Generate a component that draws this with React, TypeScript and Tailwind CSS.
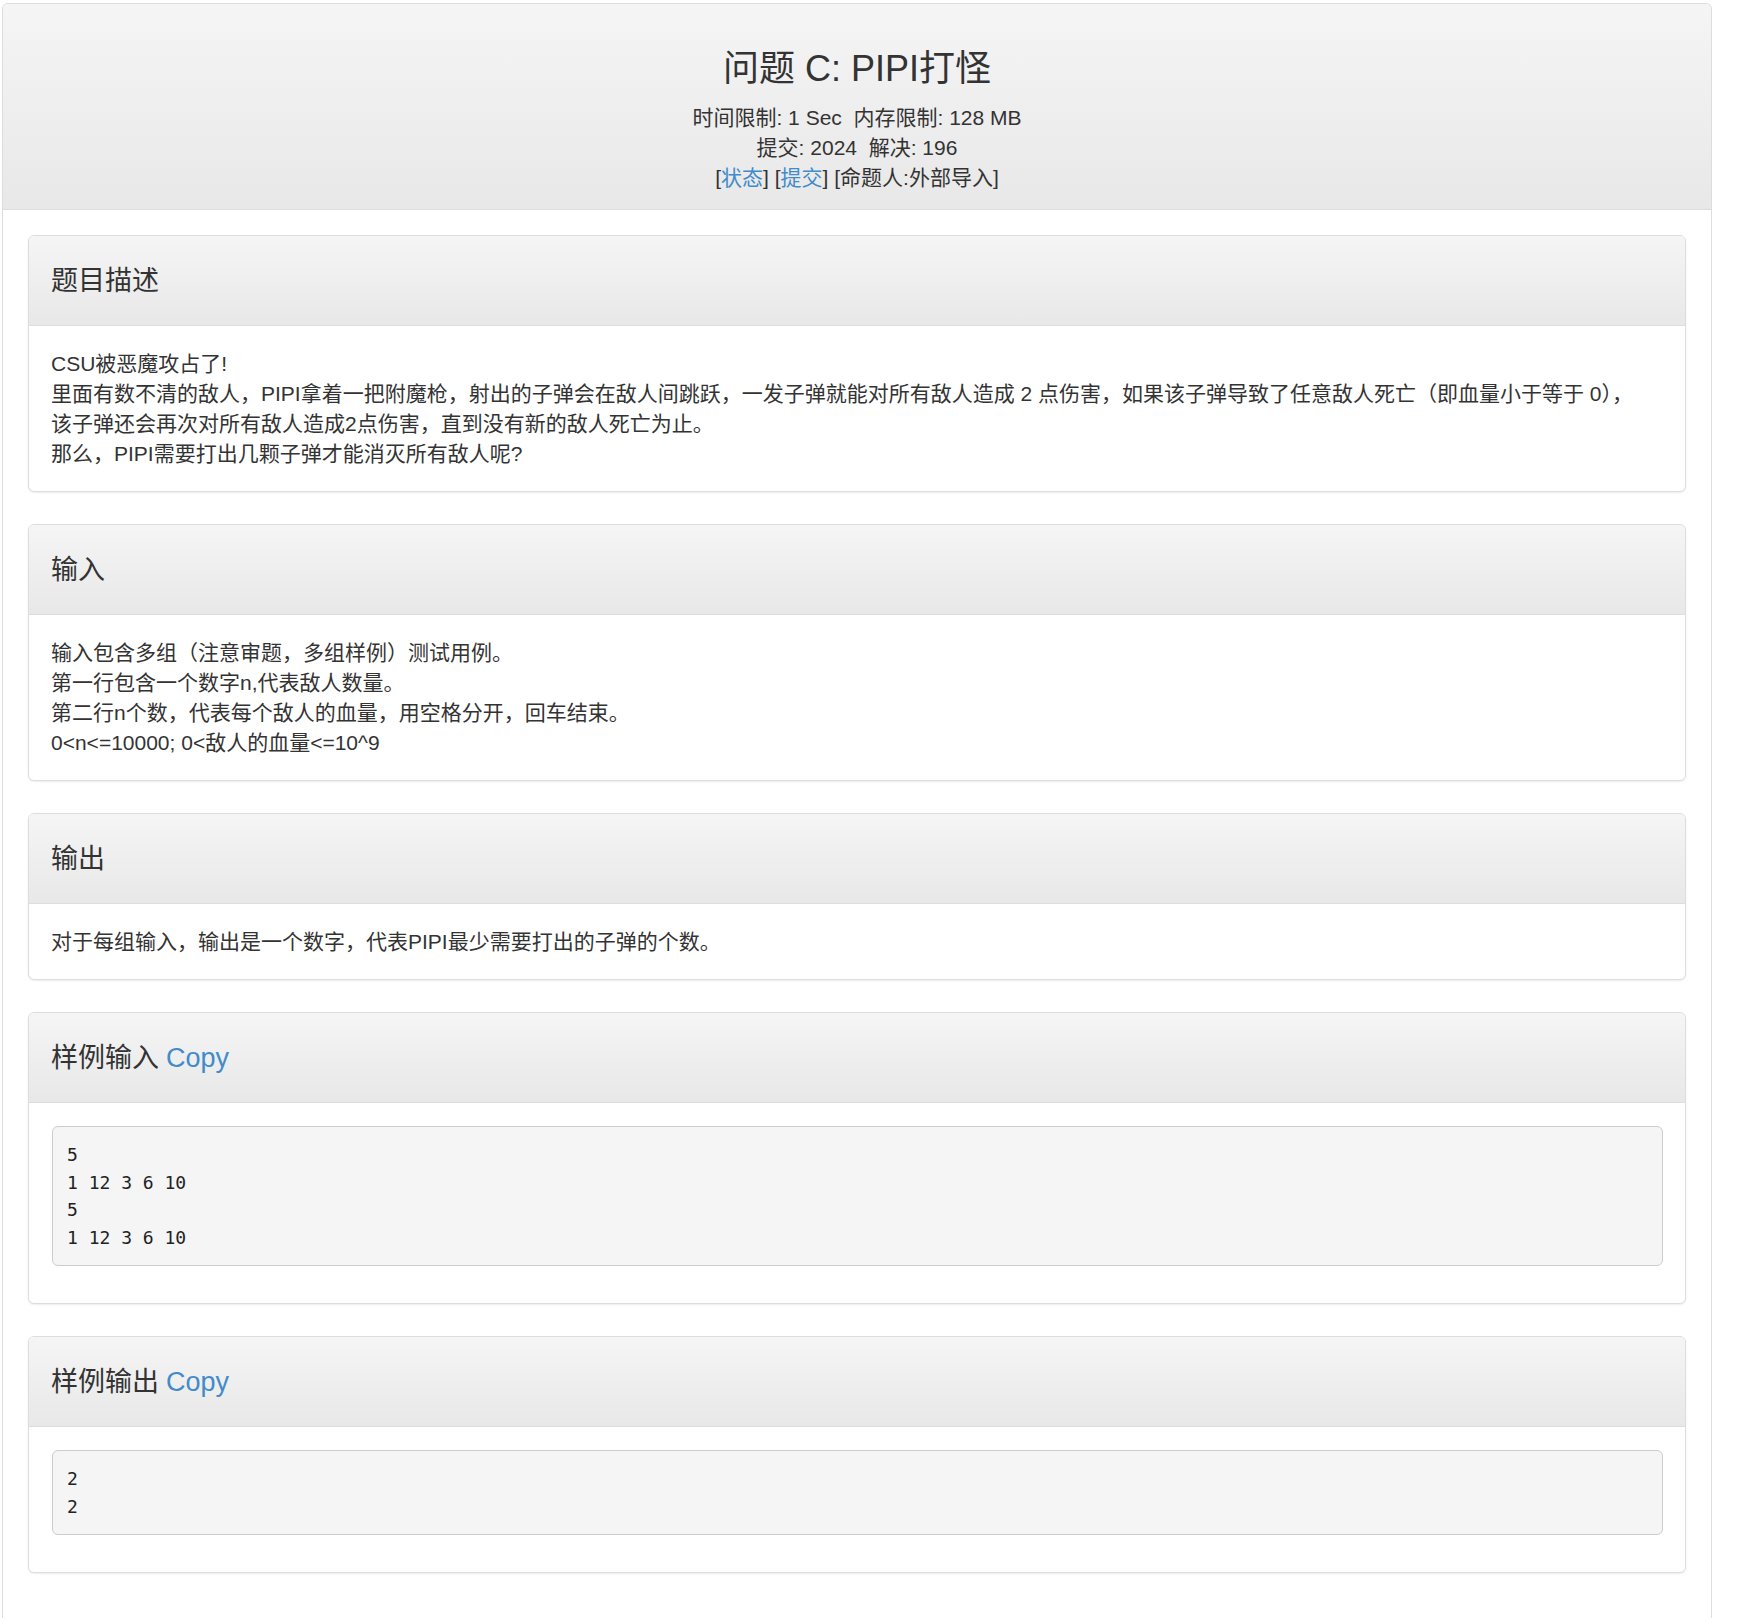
import type { ReactNode } from 'react';

const sans = "font-['Liberation_Sans','Noto_Sans_CJK_SC',sans-serif]";

function Panel({ title, children, copy }: { title: string; children: ReactNode; copy?: boolean }) {
  return (
    <div className="mb-[32px] rounded-[6px] border border-[#ddd] bg-white shadow-[0_1px_2px_rgba(0,0,0,0.075)]">
      <div className="flex h-[90px] items-center rounded-t-[5px] border-b border-[#ddd] bg-gradient-to-b from-[#f5f5f5] to-[#e8e8e8] px-[22px]">
        <h4 className="text-[27px] font-normal leading-[30px] text-[#333]">
          {title}
          {copy && <a className="ml-[7px] cursor-pointer text-[#428bca]">Copy</a>}
        </h4>
      </div>
      <div className="px-[22px] pb-[22px] pt-[23px] text-[21px] leading-[30px] text-[#333]">{children}</div>
    </div>
  );
}

function Sample({ lines }: { lines: string[] }) {
  return (
    <pre className="mb-[15px] ml-[1px] rounded-[6px] border border-[#ccc] bg-[#f5f5f5] px-[14px] py-[14px] font-['DejaVu_Sans_Mono',monospace] text-[18px] leading-[27.5px] text-[#222]">
      {lines.join('\n')}
    </pre>
  );
}

function Lines({ lines }: { lines: string[] }) {
  return (
    <div className="whitespace-nowrap">
      {lines.map((l, i) => (
        <div key={i}>{l}</div>
      ))}
    </div>
  );
}

export default function App() {
  return (
    <div className={`h-[1618px] overflow-hidden bg-white ${sans}`}>
      <div className="ml-[2px] mt-[3px] h-[1640px] w-[1710px] rounded-t-[6px] border border-b-0 border-[#ddd] bg-white">
        <div className="rounded-t-[5px] border-b border-[#ddd] bg-gradient-to-b from-[#f5f5f5] to-[#e8e8e8] pb-[16px] pt-[15px] text-center text-[#333]">
          <h2 className="mb-[14px] mt-[30px] text-[36px] font-normal leading-[40px]">问题 C: PIPI打怪</h2>
          <div className="text-[21px] leading-[30px]">
            <div className="whitespace-pre">时间限制: 1 Sec  内存限制: 128 MB</div>
            <div className="whitespace-pre">提交: 2024  解决: 196</div>
            <div>
              [<a className="cursor-pointer text-[#428bca]">状态</a>] [<a className="cursor-pointer text-[#428bca]">提交</a>] [命题人:外部导入]
            </div>
          </div>
        </div>

        <div className="px-[25px] pt-[25px]">
          <Panel title="题目描述">
            <Lines
              lines={[
                'CSU被恶魔攻占了!',
                '里面有数不清的敌人，PIPI拿着一把附魔枪，射出的子弹会在敌人间跳跃，一发子弹就能对所有敌人造成 2 点伤害，如果该子弹导致了任意敌人死亡（即血量小于等于 0），',
                '该子弹还会再次对所有敌人造成2点伤害，直到没有新的敌人死亡为止。',
                '那么，PIPI需要打出几颗子弹才能消灭所有敌人呢?',
              ]}
            />
          </Panel>

          <Panel title="输入">
            <Lines
              lines={[
                '输入包含多组（注意审题，多组样例）测试用例。',
                '第一行包含一个数字n,代表敌人数量。',
                '第二行n个数，代表每个敌人的血量，用空格分开，回车结束。',
                '0<n<=10000; 0<敌人的血量<=10^9',
              ]}
            />
          </Panel>

          <Panel title="输出">
            <Lines lines={['对于每组输入，输出是一个数字，代表PIPI最少需要打出的子弹的个数。']} />
          </Panel>

          <Panel title="样例输入" copy>
            <Sample lines={['5', '1 12 3 6 10', '5', '1 12 3 6 10']} />
          </Panel>

          <Panel title="样例输出" copy>
            <Sample lines={['2', '2']} />
          </Panel>
        </div>
      </div>
    </div>
  );
}
